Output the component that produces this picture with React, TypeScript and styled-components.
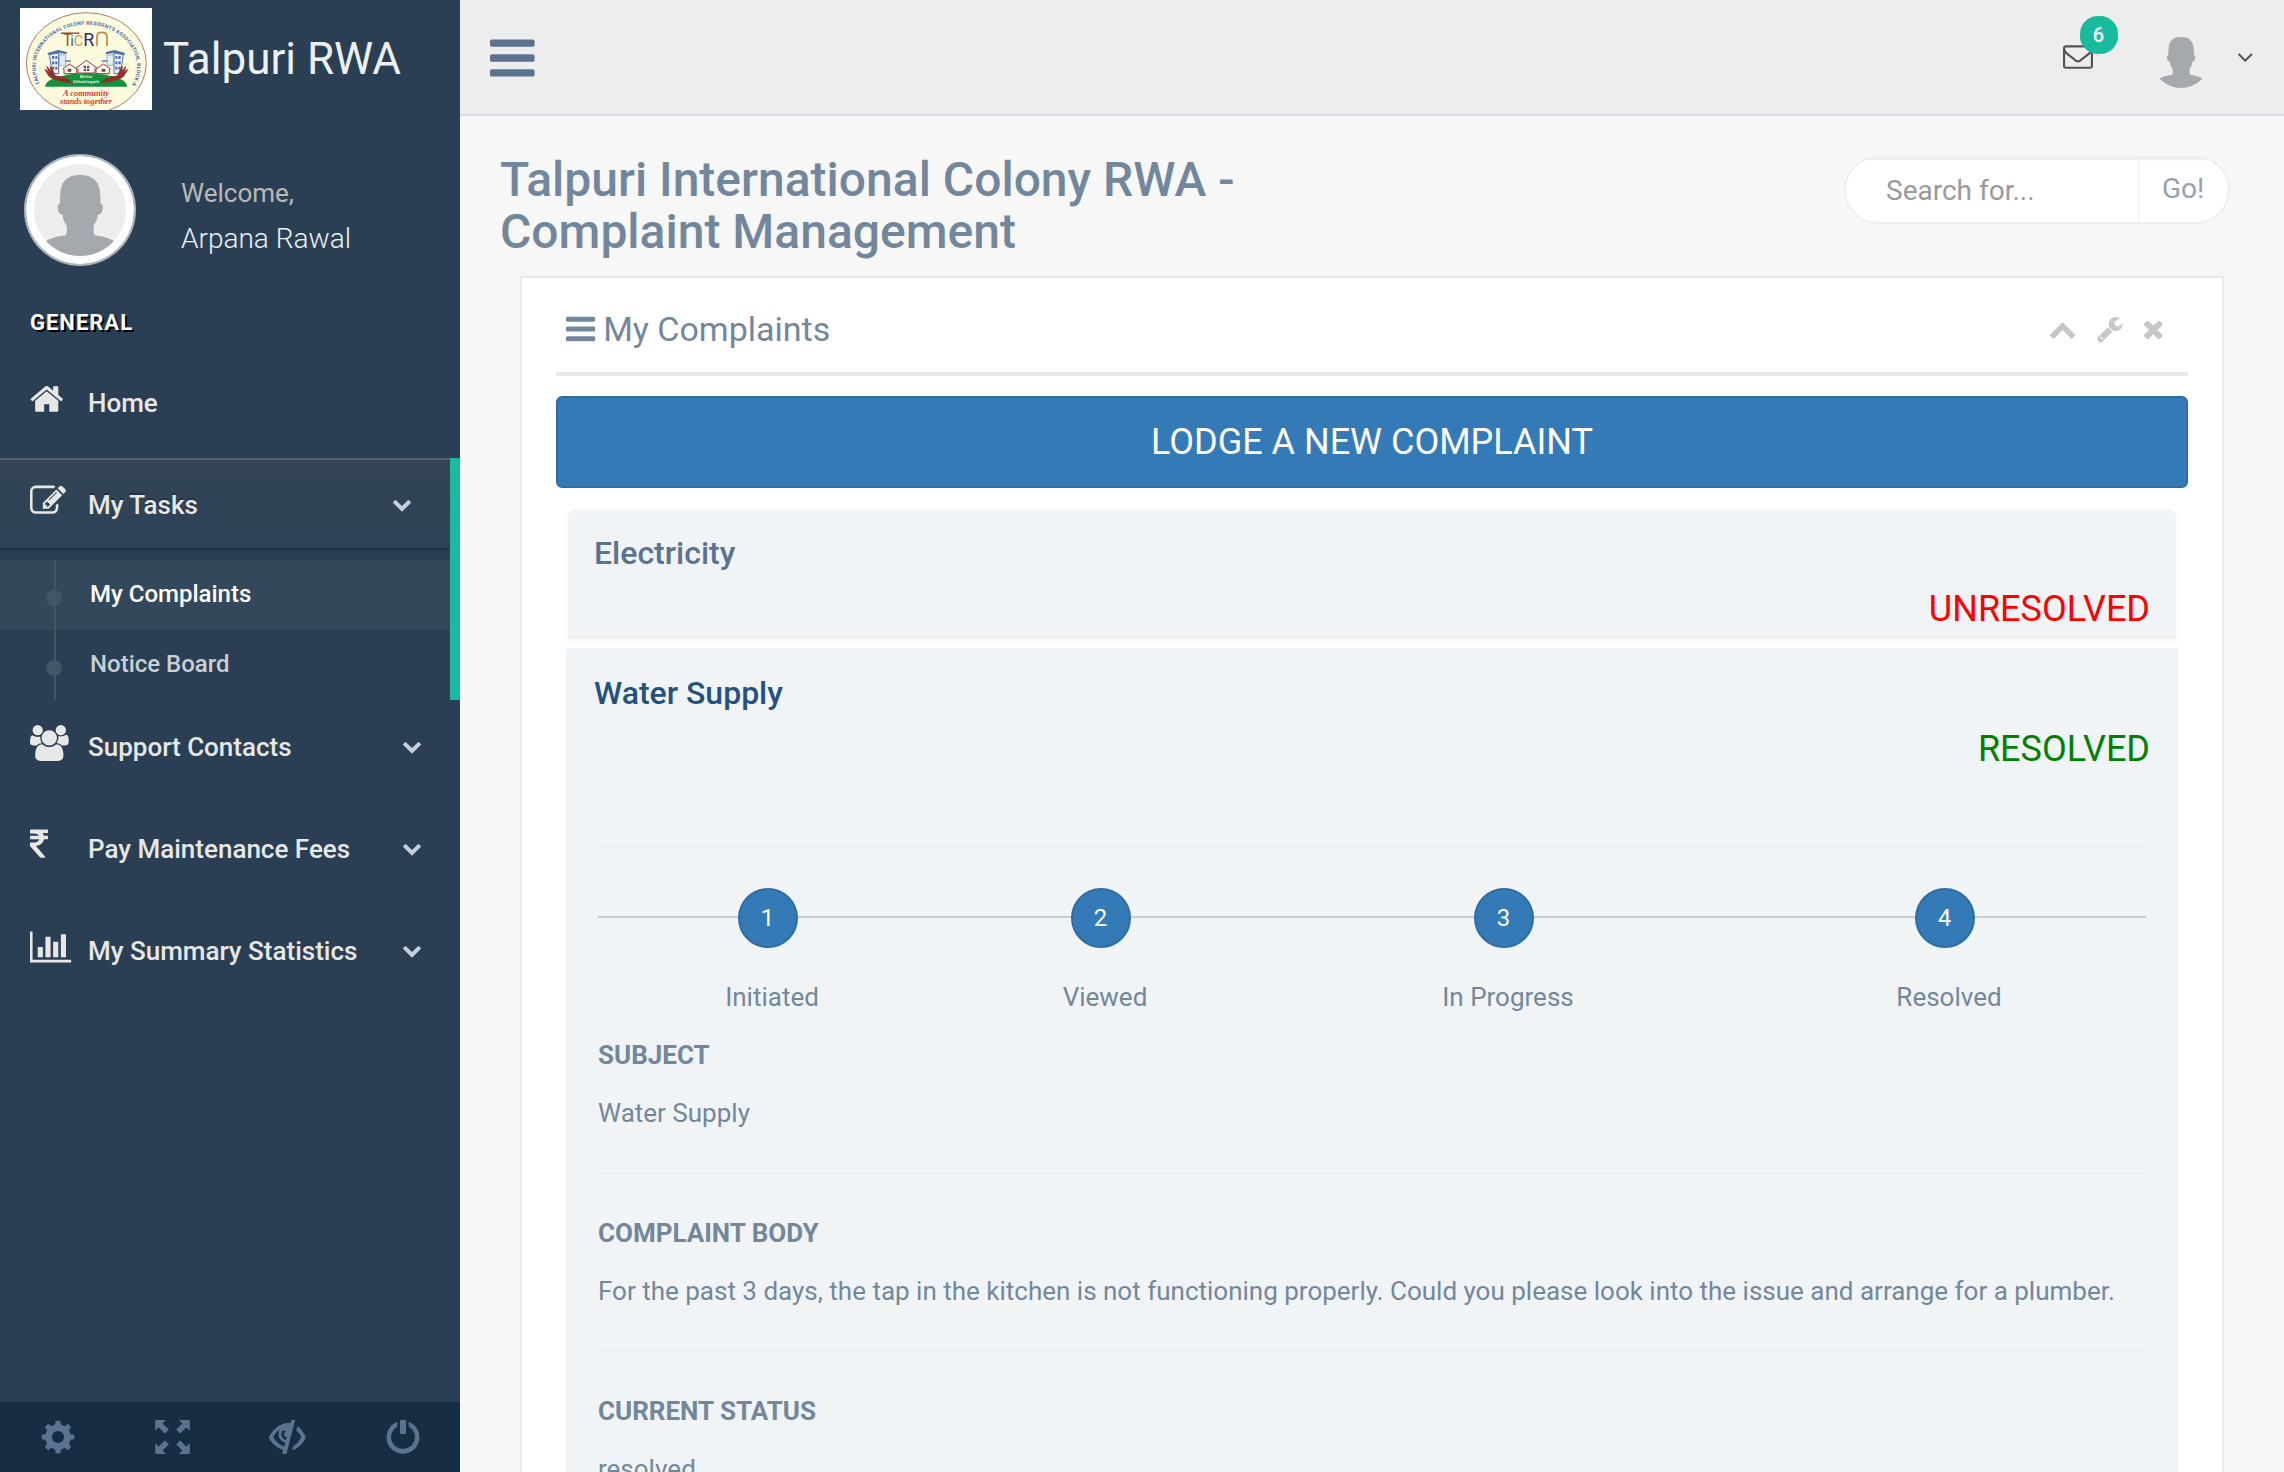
import React from "react";
import styled, { createGlobalStyle, css } from "styled-components";

const GlobalStyle = createGlobalStyle`
  *, *::before, *::after { box-sizing: border-box; }
  html, body { margin: 0; padding: 0; height: 100%; overflow: hidden; }
  body {
    background: #f7f7f7;
    color: #73879c;
    font-family: Roboto, "Liberation Sans", sans-serif;
    font-size: 26px;
    line-height: 38px;
    font-weight: 400;
  }
  h1, h2, h3, h4, p, ul { margin: 0; padding: 0; font-weight: inherit; }
  ul { list-style: none; }
  button { font-family: inherit; cursor: pointer; }
`;

/* ---------- icons ---------- */

type Shape = { x: number; w: number; d: string };

const shapes: Record<string, Shape> = {
  home: { x: 63, w: 1666, d: "M1472 992v480q0 26-19 45t-45 19h-384v-384h-256v384h-384q-26 0-45-19t-19-45v-480q0-1 .5-3t.5-3l575-474 575 474q1 2 1 6zm223-69l-62 74q-8 9-21 11h-3q-13 0-21-7l-692-577-692 577q-12 8-24 7-13-2-21-11l-62-74q-8-10-7-23.5t11-21.5l719-599q32-26 76-26t76 26l244 204v-195q0-14 9-23t23-9h192q14 0 23 9t9 23v408l219 182q10 8 11 21.5t-7 23.5z" },
  edit: { x: 0, w: 1792, d: "M888 1184l116-116-152-152-116 116v56h96v96h56zm440-720q-16-16-33 1l-350 350q-17 17-1 33t33-1l350-350q17-17 1-33zm80 594v190q0 119-84.5 203.5t-203.5 84.5h-832q-119 0-203.5-84.5t-84.5-203.5v-832q0-119 84.5-203.5t203.5-84.5h832q63 0 117 25 15 7 18 23 3 17-9 29l-49 49q-14 14-32 8-23-6-45-6h-832q-66 0-113 47t-47 113v832q0 66 47 113t113 47h832q66 0 113-47t47-113v-126q0-13 9-22l64-64q15-15 35-7t20 29zm-96-738l288 288-672 672h-288v-288zm444 132l-92 92-288-288 92-92q28-28 68-28t68 28l152 152q28 28 28 68t-28 68z" },
  users: { x: 0, w: 1920, d: "M593 896q-162 5-265 128h-134q-82 0-138-40.5t-56-118.5q0-353 124-353 6 0 43.5 21t97.5 42.5 119 21.5q67 0 133-23-5 37-5 66 0 159 92 287zm1071 637q0 120-73 189.5t-194 69.5h-874q-121 0-194-69.5t-73-189.5q0-53 3.5-103.5t14-109 26.5-108.5 43-97.5 62-81 85.5-53.5 111.5-20q10 0 43 21.5t73 48 107 48 135 21.5 135-21.5 107-48 73-48 43-21.5q61 0 111.5 20t85.5 53.5 62 81 43 97.5 26.5 108.5 14 109 3.5 103.5zm-1024-1277q0 106-75 181t-181 75-181-75-75-181 75-181 181-75 181 75 75 181zm704 384q0 159-112.5 271.5t-271.5 112.5-271.5-112.5-112.5-271.5 112.5-271.5 271.5-112.5 271.5 112.5 112.5 271.5zm576 225q0 78-56 118.5t-138 40.5h-134q-103-123-265-128 92-128 92-287 0-29-5-66 66 23 133 23 59 0 119-21.5t97.5-42.5 43.5-21q124 0 124 353zm-128-609q0 106-75 181t-181 75-181-75-75-181 75-181 181-75 181 75 75 181z" },
  rupee: { x: 448, w: 900, d: "M1345 470v102q0 14-9 23t-23 9h-168q-23 144-129 234t-276 110q167 178 459 536 14 16 4 34-8 18-29 18h-195q-16 0-25-12-306-367-498-571-9-9-9-22v-127q0-13 9.5-22.5t22.5-9.5h112q132 0 212.5-43t102.5-125h-427q-14 0-23-9t-9-23v-102q0-14 9-23t23-9h413q-57-113-268-113h-145q-13 0-22.5-9.5t-9.5-22.5v-133q0-14 9-23t23-9h832q14 0 23 9t9 23v102q0 14-9 23t-23 9h-233q47 61 64 144h171q14 0 23 9t9 23z" },
  chart: { x: 0, w: 2048, d: "M640 896v512h-256v-512h256zm384-512v1024h-256v-1024h256zm1024 1152v128h-2048v-1536h128v1408h1920zm-640-896v768h-256v-768h256zm384-384v1152h-256v-1152h256z" },
  bars: { x: 128, w: 1536, d: "M1664 1344v128q0 26-19 45t-45 19h-1408q-26 0-45-19t-19-45v-128q0-26 19-45t45-19h1408q26 0 45 19t19 45zm0-512v128q0 26-19 45t-45 19h-1408q-26 0-45-19t-19-45v-128q0-26 19-45t45-19h1408q26 0 45 19t19 45zm0-512v128q0 26-19 45t-45 19h-1408q-26 0-45-19t-19-45v-128q0-26 19-45t45-19h1408q26 0 45 19t19 45z" },
  envelope: { x: 0, w: 1792, d: "M1664 1504v-768q-32 36-69 66-268 206-426 338-51 43-83 67t-86.5 48.5-102.5 24.5h-2q-48 0-102.5-24.5t-86.5-48.5-83-67q-158-132-426-338-37-30-69-66v768q0 13 9.5 22.5t22.5 9.5h1472q13 0 22.5-9.5t9.5-22.5zm0-1051v-24.5l-.5-13-3-12.5-5.5-9-9-7.5-14-2.5h-1472q-13 0-22.5 9.5t-9.5 22.5q0 168 147 284 193 152 401 317 6 5 35 29.5t46 37.5 44.5 31.5 50.5 27.5 43 9h2q20 0 43-9t50.5-27.5 44.5-31.5 46-37.5 35-29.5q208-165 401-317 54-43 100.5-115.5t46.5-131.5zm128-37v1088q0 66-47 113t-113 47h-1472q-66 0-113-47t-47-113v-1088q0-66 47-113t113-47h1472q66 0 113 47t47 113z" },
  angleDown: { x: 397, w: 998, d: "M1395 736q0 13-10 23l-466 466q-10 10-23 10t-23-10l-466-466q-10-10-10-23t10-23l50-50q10-10 23-10t23 10l393 393 393-393q10-10 23-10t23 10l50 50q10 10 10 23z" },
  chevronDown: { x: 90, w: 1612, d: "M1683 808l-742 741q-19 19-45 19t-45-19l-742-741q-19-19-19-45.5t19-45.5l166-165q19-19 45-19t45 19l531 531 531-531q19-19 45-19t45 19l166 165q19 19 19 45.5t-19 45.5z" },
  chevronUp: { x: 90, w: 1612, d: "M1683 1331l-166 165q-19 19-45 19t-45-19l-531-531-531 531q-19 19-45 19t-45-19l-166-165q-19-19-19-45.5t19-45.5l742-741q19-19 45-19t45 19l742 741q19 19 19 45.5t-19 45.5z" },
  wrench: { x: 85, w: 1641, d: "M448 1472q0-26-19-45t-45-19-45 19-19 45 19 45 45 19 45-19 19-45zm644-420l-682 682q-37 37-90 37-52 0-91-37l-106-108q-38-36-38-90 0-53 38-91l681-681q39 98 114.5 173.5t173.5 114.5zm634-435q0 39-23 106-47 134-164.5 217.5t-258.5 83.5q-185 0-316.5-131.5t-131.5-316.5 131.5-316.5 316.5-131.5q58 0 121.5 16.5t107.5 46.5q16 11 16 28t-16 28l-293 169v224l193 107q5-3 79-48.5t135.5-81 70.5-35.5q15 0 23.5 10t8.5 25z" },
  close: { x: 302, w: 1188, d: "M1490 1322q0 40-28 68l-136 136q-28 28-68 28t-68-28l-294-294-294 294q-28 28-68 28t-68-28l-136-136q-28-28-28-68t28-68l294-294-294-294q-28-28-28-68t28-68l136-136q28-28 68-28t68 28l294 294 294-294q28-28 68-28t68 28l136 136q28 28 28 68t-28 68l-294 294 294 294q28 28 28 68z" },
};

const Svg = styled.svg`
  display: block;
  flex: none;
  fill: currentColor;
  overflow: visible;
`;

function Glyph({ name, size }: { name: string; size: number }) {
  const s = shapes[name];
  return (
    <Svg viewBox={`${s.x} 0 ${s.w} 1792`} width={(s.w / 1792) * size} height={size} aria-hidden>
      <path d={s.d} />
    </Svg>
  );
}

function CogIcon() {
  const teeth = [0, 45, 90, 135, 180, 225, 270, 315];
  return (
    <Svg viewBox="-17 -17 34 34" width="34" height="34">
      <path fillRule="evenodd" d="M0-12.6A12.6 12.6 0 1 1 0 12.6A12.6 12.6 0 1 1 0-12.6ZM0-6.1A6.1 6.1 0 1 0 0 6.1A6.1 6.1 0 1 0 0-6.1Z" />
      {teeth.map((a) => (
        <path key={a} transform={`rotate(${a})`} d="M-4.2-11.4L-2.6-13.4V-15.4Q-2.5-16.3-1.6-16.3H1.6Q2.5-16.3 2.6-15.4V-13.4L4.2-11.4Z" />
      ))}
    </Svg>
  );
}

function FullscreenIcon() {
  return (
    <Svg viewBox="-17.5 -17 35 34" width="35" height="34">
      {[[1, 1], [-1, 1], [1, -1], [-1, -1]].map(([a, b]) => (
        <path key={`${a}${b}`} transform={`scale(${a} ${b})`} d="M6.3-17H16.5Q17.3-17 17.3-16.2V-6.2L13.8-9.6L7.6-3.6L3.6-7.6L10-13.6Z" />
      ))}
    </Svg>
  );
}

function EyeCloseIcon() {
  return (
    <Svg viewBox="0 0 37 34" width="37" height="34">
      <path fillRule="evenodd" d="M22.3 0H26.2L17.4 34H13.2L14.2 30.2Q5.8 27.3 .6 19.2Q-.4 17.3 .6 15.3Q8.5 3 19.5 2.7L21.6 2.8ZM10.3 9.5Q6.7 12.2 4.2 17.1Q8.5 24.4 15.2 26.7L16.2 22.7Q10.6 21.3 9.6 15.6Q9.3 12.4 10.3 9.5ZM13.2 10.7Q10.5 17.5 16.9 20L17.7 17.1Q14.5 16.7 14.9 13.8Q15.2 12.4 16.6 12.1Q16.3 9.7 13.2 10.7Z" />
      <path d="M28.6 6Q33 9.5 36.1 15.2Q37 17.2 36.1 19Q31.7 27.2 23.2 30.5L24.4 26.2Q29.6 23.2 32.3 17.1Q30.7 13.5 27.3 10.6Z" />
    </Svg>
  );
}

function PowerIcon() {
  return (
    <Svg viewBox="0 0 34 34" width="34" height="34">
      <rect x="14" y="0" width="6" height="14" rx="0.8" />
      <path d="M11.2 1.8V6.7A11.9 11.9 0 1 0 22.8 6.7V1.8A16.5 16.5 0 1 1 11.2 1.8Z" />
    </Svg>
  );
}

function PersonPicture({ size }: { size: number }) {
  const id = `person-${size}`;
  return (
    <Svg viewBox="0 0 100 100" width={size} height={size}>
      <clipPath id={id}><circle cx="50" cy="50" r="50" /></clipPath>
      <g clipPath={`url(#${id})`}>
        <rect width="100" height="100" fill="#ededed" />
        <path
          fill="#a4a9ad"
          d="M50 12C65 12 71.5 20 72 33L72.5 43.500C74.5 43.5 75 45.5 74.7 48C74 52 73 55 69.5 55C69 60 67 64 64.8 67V73Q65 77 66.5 77.7C75 78.5 84 81 92 87V100H8V87C16 81 25 78.5 34 77.7Q35.6 77 35.7 73V67C33 64 31.5 60 30.8 55C27.5 55 26.5 52 25.8 48C25.5 45.5 26 43.5 28 43.5L28.5 33C29 20 35 12 50 12Z"
        />
      </g>
    </Svg>
  );
}

function Tower() {
  return (
    <g>
      <path d="M143 159L174 150L200 156V163L176 158L144 164Z" fill="#4a6fae" />
      <path d="M148 164L176 159V221H157Z" fill="#f4f7fb" stroke="#4a6fae" strokeWidth="3" />
      <path d="M178 163L197 166V196H178Z" fill="#e6ebf3" stroke="#6f8fc0" strokeWidth="2" />
      <path d="M196 183H213" stroke="#4a6fae" strokeWidth="4" />
      {[168, 184, 200].map((y) => (
        <g key={y} fill="#4a6fae">
          <rect x="156" y={y} width="7" height="9" />
          <rect x="166" y={y} width="6" height="9" />
        </g>
      ))}
    </g>
  );
}

function Hand() {
  return (
    <g fill="#8d2f2a">
      <path d="M132 206Q139 207 147 216Q156 224 170 227Q190 229 203 236Q212 241 216 249Q196 249 178 243Q155 238 146 229Z" />
      <path d="M139 198Q144 198 157 222L150 223Q141 210 139 198ZM149 198Q154 199 166 224L158 225Q149 211 149 198Z" />
    </g>
  );
}

function SocietyLogo() {
  return (
    <Svg viewBox="60 24 396 306" width="132" height="102">
      <rect x="60" y="24" width="396" height="306" fill="#fff" />
      <clipPath id="logo-box"><rect x="60" y="24" width="396" height="306" /></clipPath>
      <g clipPath="url(#logo-box)">
        <ellipse cx="259" cy="190" rx="180" ry="152" fill="#fdfbdd" stroke="#a85a50" strokeWidth="2.5" />
        <path id="logo-arc" d="M120 251A152 126 0 1 1 398 251" fill="none" />
        <text fontSize="15" fontWeight="700" fill="#4a66a8">
          <textPath href="#logo-arc" textLength="548" lengthAdjust="spacing">TALPURI INTERNATIONAL COLONY RESIDENTS ASSOCIATION, BLOCK-A</textPath>
        </text>
        <path d="M183 99.500H238" stroke="#96392f" strokeWidth="4" />
        <text x="190" y="137" fill="#96392f" fontSize="55" textLength="26" lengthAdjust="spacingAndGlyphs">T</text>
        <text x="211" y="137" fill="#3f5c9c" fontSize="44">i</text>
        <text x="221" y="137" fill="#e2923c" fontSize="42" textLength="28" lengthAdjust="spacingAndGlyphs">C</text>
        <text x="250" y="138" fill="#2b2b78" fontSize="54" textLength="33" lengthAdjust="spacingAndGlyphs">R</text>
        <path d="M291 138V110Q291 97 306 97Q321 97 321 110V138" fill="none" stroke="#c98345" strokeWidth="5" />
        <Tower />
        <g transform="translate(518 0) scale(-1 1)"><Tower /></g>
        <path d="M135 260Q137 246 155 238Q205 219 259 219Q313 219 363 238Q380 246 381 260Z" fill="#12913f" />
        <g fill="#fff" stroke="#96392f" strokeWidth="3">
          <path d="M192 205V221H230V205" /><path d="M188 207L208 192L230 207" />
          <path d="M288 205V221H328V205" /><path d="M288 207L310 192L332 207" />
          <path d="M234 201V219H285V201" /><path d="M227 205L259 181L292 205" />
        </g>
        <g fill="#96392f">
          <path d="M251 197H258V204H251ZM261 197H268V204H261ZM251 206H258V213H251ZM261 206H268V213H261Z" />
          <path d="M203 206H214V215H203ZM305 206H316V215H305Z" />
        </g>
        <Hand />
        <g transform="translate(518 0) scale(-1 1)"><Hand /></g>
        <g fontWeight="700" fill="#e8f5ea" textAnchor="middle" fontSize="12">
          <text x="258" y="235" textLength="36">Bhilai</text>
          <text x="258" y="249" textLength="78">Chhattisgarh</text>
        </g>
        <g fontFamily='"Liberation Serif", serif' fontStyle="italic" fontWeight="700" fill="#d6402f" textAnchor="middle" fontSize="24">
          <text x="258" y="287" textLength="138" lengthAdjust="spacingAndGlyphs">A community</text>
          <text x="258" y="312" textLength="156" lengthAdjust="spacingAndGlyphs">stands together</text>
        </g>
      </g>
    </Svg>
  );
}

/* ---------- sidebar ---------- */

const Page = styled.div`
  display: flex;
  width: 100%;
  height: 1472px;
  overflow: hidden;
`;

const Sidebar = styled.aside`
  flex: none;
  display: flex;
  flex-direction: column;
  width: 460px;
  background: #2a3f54;
`;

const Brand = styled.div`
  display: flex;
  align-items: center;
  gap: 11px;
  height: 118px;
  padding: 0 0 0 20px;
  color: #ecf0f1;
  font-size: 44px;
`;

const Profile = styled.div`
  display: flex;
  align-items: flex-start;
  gap: 45px;
  height: 188px;
  padding: 36px 0 0 24px;
`;

const ProfileFrame = styled.div`
  padding: 8px;
  border: 2px solid rgba(255, 255, 255, 0.62);
  background: #fff;
  background-clip: padding-box;
  border-radius: 50%;
`;

const ProfileText = styled.div`
  padding-top: 20px;
`;

const Welcome = styled.p`
  color: #bab8b8;
  font-size: 26px;
`;

const UserName = styled.h2`
  margin-top: 8px;
  color: #ecf0f1;
  font-size: 28px;
  font-weight: 300;
`;

const SectionTitle = styled.h3`
  height: 50px;
  padding-left: 30px;
  line-height: 33px;
  color: #fff;
  font-size: 22px;
  font-weight: 700;
  letter-spacing: 1px;
  text-transform: uppercase;
  text-shadow: 2px 2px #000;
`;

const Menu = styled.ul`
  flex: 1;
`;

const MenuItem = styled.li<{ $active?: boolean }>`
  ${(p) => p.$active && css`border-right: 10px solid #1abb9c;`}
`;

const MenuLink = styled.a<{ $active?: boolean }>`
  display: flex;
  align-items: flex-start;
  height: 92px;
  margin-bottom: 10px;
  padding: 25px 39px 0 30px;
  color: #e7e7e7;
  font-weight: 500;
  ${(p) =>
    p.$active &&
    css`
      background: linear-gradient(#334556, #2c4257), #2a3f54;
      box-shadow: rgba(0, 0, 0, 0.25) 0 -2px 0 inset, rgba(255, 255, 255, 0.16) 0 2px 0 inset;
      text-shadow: rgba(0, 0, 0, 0.25) 0 -2px 0;
    `}
`;

const MenuIcon = styled.span`
  flex: none;
  width: 58px;
`;

const MenuLabel = styled.span`
  flex: 1;
  padding-top: 3px;
`;

const MenuArrow = styled.span`
  padding-top: 11px;
  color: #c4cfda;
`;

const SubMenu = styled.ul``;

const SubItem = styled.li<{ $current?: boolean }>`
  position: relative;
  height: 70px;
  padding: 15px 0 0 90px;
  background: ${(p) => (p.$current ? "rgba(255, 255, 255, 0.05)" : "transparent")};
  color: ${(p) => (p.$current ? "#fff" : "rgba(255, 255, 255, 0.75)")};
  font-size: 24px;
  font-weight: 500;

  &::before {
    content: "";
    position: absolute;
    left: 54px;
    top: 0;
    bottom: 0;
    width: 2px;
    background: #425668;
  }
  &::after {
    content: "";
    position: absolute;
    left: 46px;
    top: 30px;
    width: 16px;
    height: 16px;
    border-radius: 50%;
    background: #425668;
  }
`;

const SidebarFooter = styled.div`
  display: grid;
  grid-template-columns: repeat(4, 1fr);
  height: 70px;
  background: #172d44;
  color: #5a738e;
`;

const FooterButton = styled.a`
  display: flex;
  align-items: center;
  justify-content: center;
`;

const menu = [
  { icon: "home", label: "Home" },
  { icon: "edit", label: "My Tasks", children: ["My Complaints", "Notice Board"] },
  { icon: "users", label: "Support Contacts", arrow: true },
  { icon: "rupee", label: "Pay Maintenance Fees", arrow: true },
  { icon: "chart", label: "My Summary Statistics", arrow: true },
];

/* ---------- main column ---------- */

const Main = styled.main`
  flex: 1;
  min-width: 0;
`;

const TopNav = styled.header`
  display: flex;
  align-items: center;
  justify-content: space-between;
  height: 116px;
  padding: 0 32px 0 30px;
  background: #ededed;
  border-bottom: 2px solid #d9dee4;
`;

const NavToggle = styled.a`
  padding-top: 1px;
  color: #5a738e;
`;

const NavActions = styled.div`
  display: flex;
  align-items: center;
  height: 114px;
  color: #515356;
`;

const Inbox = styled.div`
  position: relative;
  margin: -3px 59px 0 0;
`;

const Badge = styled.span`
  position: absolute;
  left: 17px;
  top: -25px;
  width: 38px;
  height: 38px;
  border-radius: 18px;
  background: #1abb9c;
  color: #fff;
  font-size: 20px;
  font-weight: 500;
  line-height: 38px;
  text-align: center;
`;

const NavAvatar = styled.div`
  margin: 4px 28px 0 0;
`;

const PageHead = styled.div`
  display: flex;
  justify-content: space-between;
  align-items: flex-start;
  height: 160px;
  padding: 36px 54px 0 40px;
`;

const PageTitle = styled.h1`
  width: 800px;
  padding: 2px 0 0;
  font-size: 48px;
  font-weight: 500;
  line-height: 52px;
`;

const Search = styled.div`
  display: flex;
  width: 386px;
  height: 68px;
  margin-top: 4px;
  border: 2px solid #ebeff3;
  border-radius: 34px;
  background: #fff;
  overflow: hidden;
  font-size: 28px;
`;

const SearchField = styled.div`
  flex: 1;
  padding-left: 40px;
  box-shadow: inset 0 2px 0 #ececec;
  color: #999;
  line-height: 65px;
`;

const SearchButton = styled.div`
  width: 90px;
  padding-left: 23px;
  border-left: 1px solid #f0f1f3;
  box-shadow: inset 0 2px 2px rgba(0, 0, 0, 0.075);
  color: #93a2b2;
  line-height: 62px;
`;

const Panel = styled.section`
  width: 1704px;
  height: 1400px;
  margin-left: 60px;
  padding: 20px 34px;
  border: 2px solid #e6e9ed;
  background: #fff;
`;

const PanelTitle = styled.div`
  display: flex;
  align-items: flex-start;
  justify-content: space-between;
  height: 78px;
  padding: 0 25px 0 10px;
  border-bottom: 4px solid #e6e9ed;
`;

const PanelName = styled.h2`
  display: flex;
  align-items: center;
  gap: 8px;
  height: 61px;
  font-size: 34px;
`;

const PanelTools = styled.div`
  display: flex;
  align-items: center;
  gap: 22px;
  height: 61px;
  color: #c5c7cb;
`;

const LodgeButton = styled.button`
  display: block;
  width: 100%;
  height: 92px;
  margin: 20px 0 20px;
  padding: 0;
  border: 2px solid #2e6da4;
  border-radius: 6px;
  background: #337ab7;
  color: #fff;
  font-size: 36px;
`;

const Accordion = styled.div`
  padding: 0 10px;
`;

const Complaint = styled.article<{ $open?: boolean }>`
  ${(p) =>
    p.$open
      ? css`
          height: 1000px;
          background: #f1f4f7;
          box-shadow: 0 2px 2px rgba(0, 0, 0, 0.05);
        `
      : css`
          height: 130px;
          margin-bottom: 10px;
          border: 2px solid #fdfdfe;
          border-bottom-color: #eeeeee;
          border-radius: 8px 8px 0 0;
          background: #f1f4f7;
          background-clip: padding-box;
          box-shadow: 0 2px 4px rgba(0, 0, 0, 0.06);
        `}
`;

const ComplaintHead = styled.div<{ $open?: boolean }>`
  display: flex;
  flex-direction: column;
  height: ${(p) => (p.$open ? 158 : 126)}px;
  padding: ${(p) => (p.$open ? "27px 28px 0 28px" : "25px 26px 0 26px")};
`;

const ComplaintName = styled.h4<{ $open?: boolean }>`
  height: 36px;
  line-height: 36px;
  font-size: 32px;
  font-weight: 500;
  color: ${(p) => (p.$open ? "#23527c" : "#5a738e")};
`;

const Status = styled.p<{ $tone: string }>`
  margin-top: 12px;
  align-self: flex-end;
  line-height: 52px;
  font-size: 36px;
  color: ${(p) => p.$tone};
`;

const ComplaintBody = styled.div`
  padding: 40px 32px 0;
`;

const Rule = styled.hr`
  height: 2px;
  margin: 0 0 40px;
  border: 0;
  background: #eee;
`;

const Steps = styled.div`
  display: grid;
  grid-template-columns: 348px 318px 488px 394px;
  height: 148px;
  background: linear-gradient(#ccc, #ccc) 0 28px / 100% 2px no-repeat;
`;

const Step = styled.div`
  display: flex;
  flex-direction: column;
  align-items: center;
`;

const StepDot = styled.span`
  width: 60px;
  height: 60px;
  margin-right: 9px;
  border: 2px solid #2e6da4;
  border-radius: 50%;
  background: #337ab7;
  color: #fff;
  font-size: 24px;
  line-height: 56px;
  text-align: center;
`;

const StepName = styled.p`
  margin-top: 30px;
`;

const FieldLabel = styled.p`
  font-weight: 700;
  margin-bottom: 20px;
`;

const FieldValue = styled.p`
  margin-bottom: 40px;
  white-space: nowrap;
`;

const steps = ["Initiated", "Viewed", "In Progress", "Resolved"];

const fields = [
  { label: "SUBJECT", value: "Water Supply" },
  {
    label: "COMPLAINT BODY",
    value:
      "For the past 3 days, the tap in the kitchen is not functioning properly. Could you please look into the issue and arrange for a plumber.",
  },
  { label: "CURRENT STATUS", value: "resolved" },
];

export default function App() {
  return (
    <>
      <GlobalStyle />
      <Page>
        <Sidebar>
          <Brand>
            <SocietyLogo />
            <span>Talpuri RWA</span>
          </Brand>
          <Profile>
            <ProfileFrame><PersonPicture size={92} /></ProfileFrame>
            <ProfileText>
              <Welcome>Welcome,</Welcome>
              <UserName>Arpana Rawal</UserName>
            </ProfileText>
          </Profile>
          <SectionTitle>General</SectionTitle>
          <Menu>
            {menu.map((m) => (
              <MenuItem key={m.label} $active={!!m.children}>
                <MenuLink $active={!!m.children}>
                  <MenuIcon><Glyph name={m.icon} size={36} /></MenuIcon>
                  <MenuLabel>{m.label}</MenuLabel>
                  {(m.arrow || m.children) && <MenuArrow><Glyph name="chevronDown" size={20} /></MenuArrow>}
                </MenuLink>
                {m.children && (
                  <SubMenu>
                    {m.children.map((c, i) => <SubItem key={c} $current={i === 0}>{c}</SubItem>)}
                  </SubMenu>
                )}
              </MenuItem>
            ))}
          </Menu>
          <SidebarFooter>
            <FooterButton><CogIcon /></FooterButton>
            <FooterButton><FullscreenIcon /></FooterButton>
            <FooterButton><EyeCloseIcon /></FooterButton>
            <FooterButton><PowerIcon /></FooterButton>
          </SidebarFooter>
        </Sidebar>

        <Main>
          <TopNav>
            <NavToggle><Glyph name="bars" size={52} /></NavToggle>
            <NavActions>
              <Inbox>
                <Glyph name="envelope" size={30} />
                <Badge>6</Badge>
              </Inbox>
              <NavAvatar><PersonPicture size={58} /></NavAvatar>
              <Glyph name="angleDown" size={26} />
            </NavActions>
          </TopNav>

          <PageHead>
            <PageTitle>Talpuri International Colony RWA - Complaint Management</PageTitle>
            <Search>
              <SearchField>Search for...</SearchField>
              <SearchButton>Go!</SearchButton>
            </Search>
          </PageHead>

          <Panel>
            <PanelTitle>
              <PanelName><Glyph name="bars" size={34} />My Complaints</PanelName>
              <PanelTools>
                <Glyph name="chevronUp" size={28} />
                <Glyph name="wrench" size={28} />
                <Glyph name="close" size={28} />
              </PanelTools>
            </PanelTitle>
            <LodgeButton>LODGE A NEW COMPLAINT</LodgeButton>
            <Accordion>
              <Complaint>
                <ComplaintHead>
                  <ComplaintName>Electricity</ComplaintName>
                  <Status $tone="#ff0000">UNRESOLVED</Status>
                </ComplaintHead>
              </Complaint>
              <Complaint $open>
                <ComplaintHead $open>
                  <ComplaintName $open>Water Supply</ComplaintName>
                  <Status $tone="#008000">RESOLVED</Status>
                </ComplaintHead>
                <ComplaintBody>
                  <Rule />
                  <Steps>
                    {steps.map((s, i) => (
                      <Step key={s}>
                        <StepDot>{i + 1}</StepDot>
                        <StepName>{s}</StepName>
                      </Step>
                    ))}
                  </Steps>
                  {fields.map((f, i) => (
                    <React.Fragment key={f.label}>
                      {i > 0 && <Rule />}
                      <FieldLabel>{f.label}</FieldLabel>
                      <FieldValue>{f.value}</FieldValue>
                    </React.Fragment>
                  ))}
                </ComplaintBody>
              </Complaint>
            </Accordion>
          </Panel>
        </Main>
      </Page>
    </>
  );
}
